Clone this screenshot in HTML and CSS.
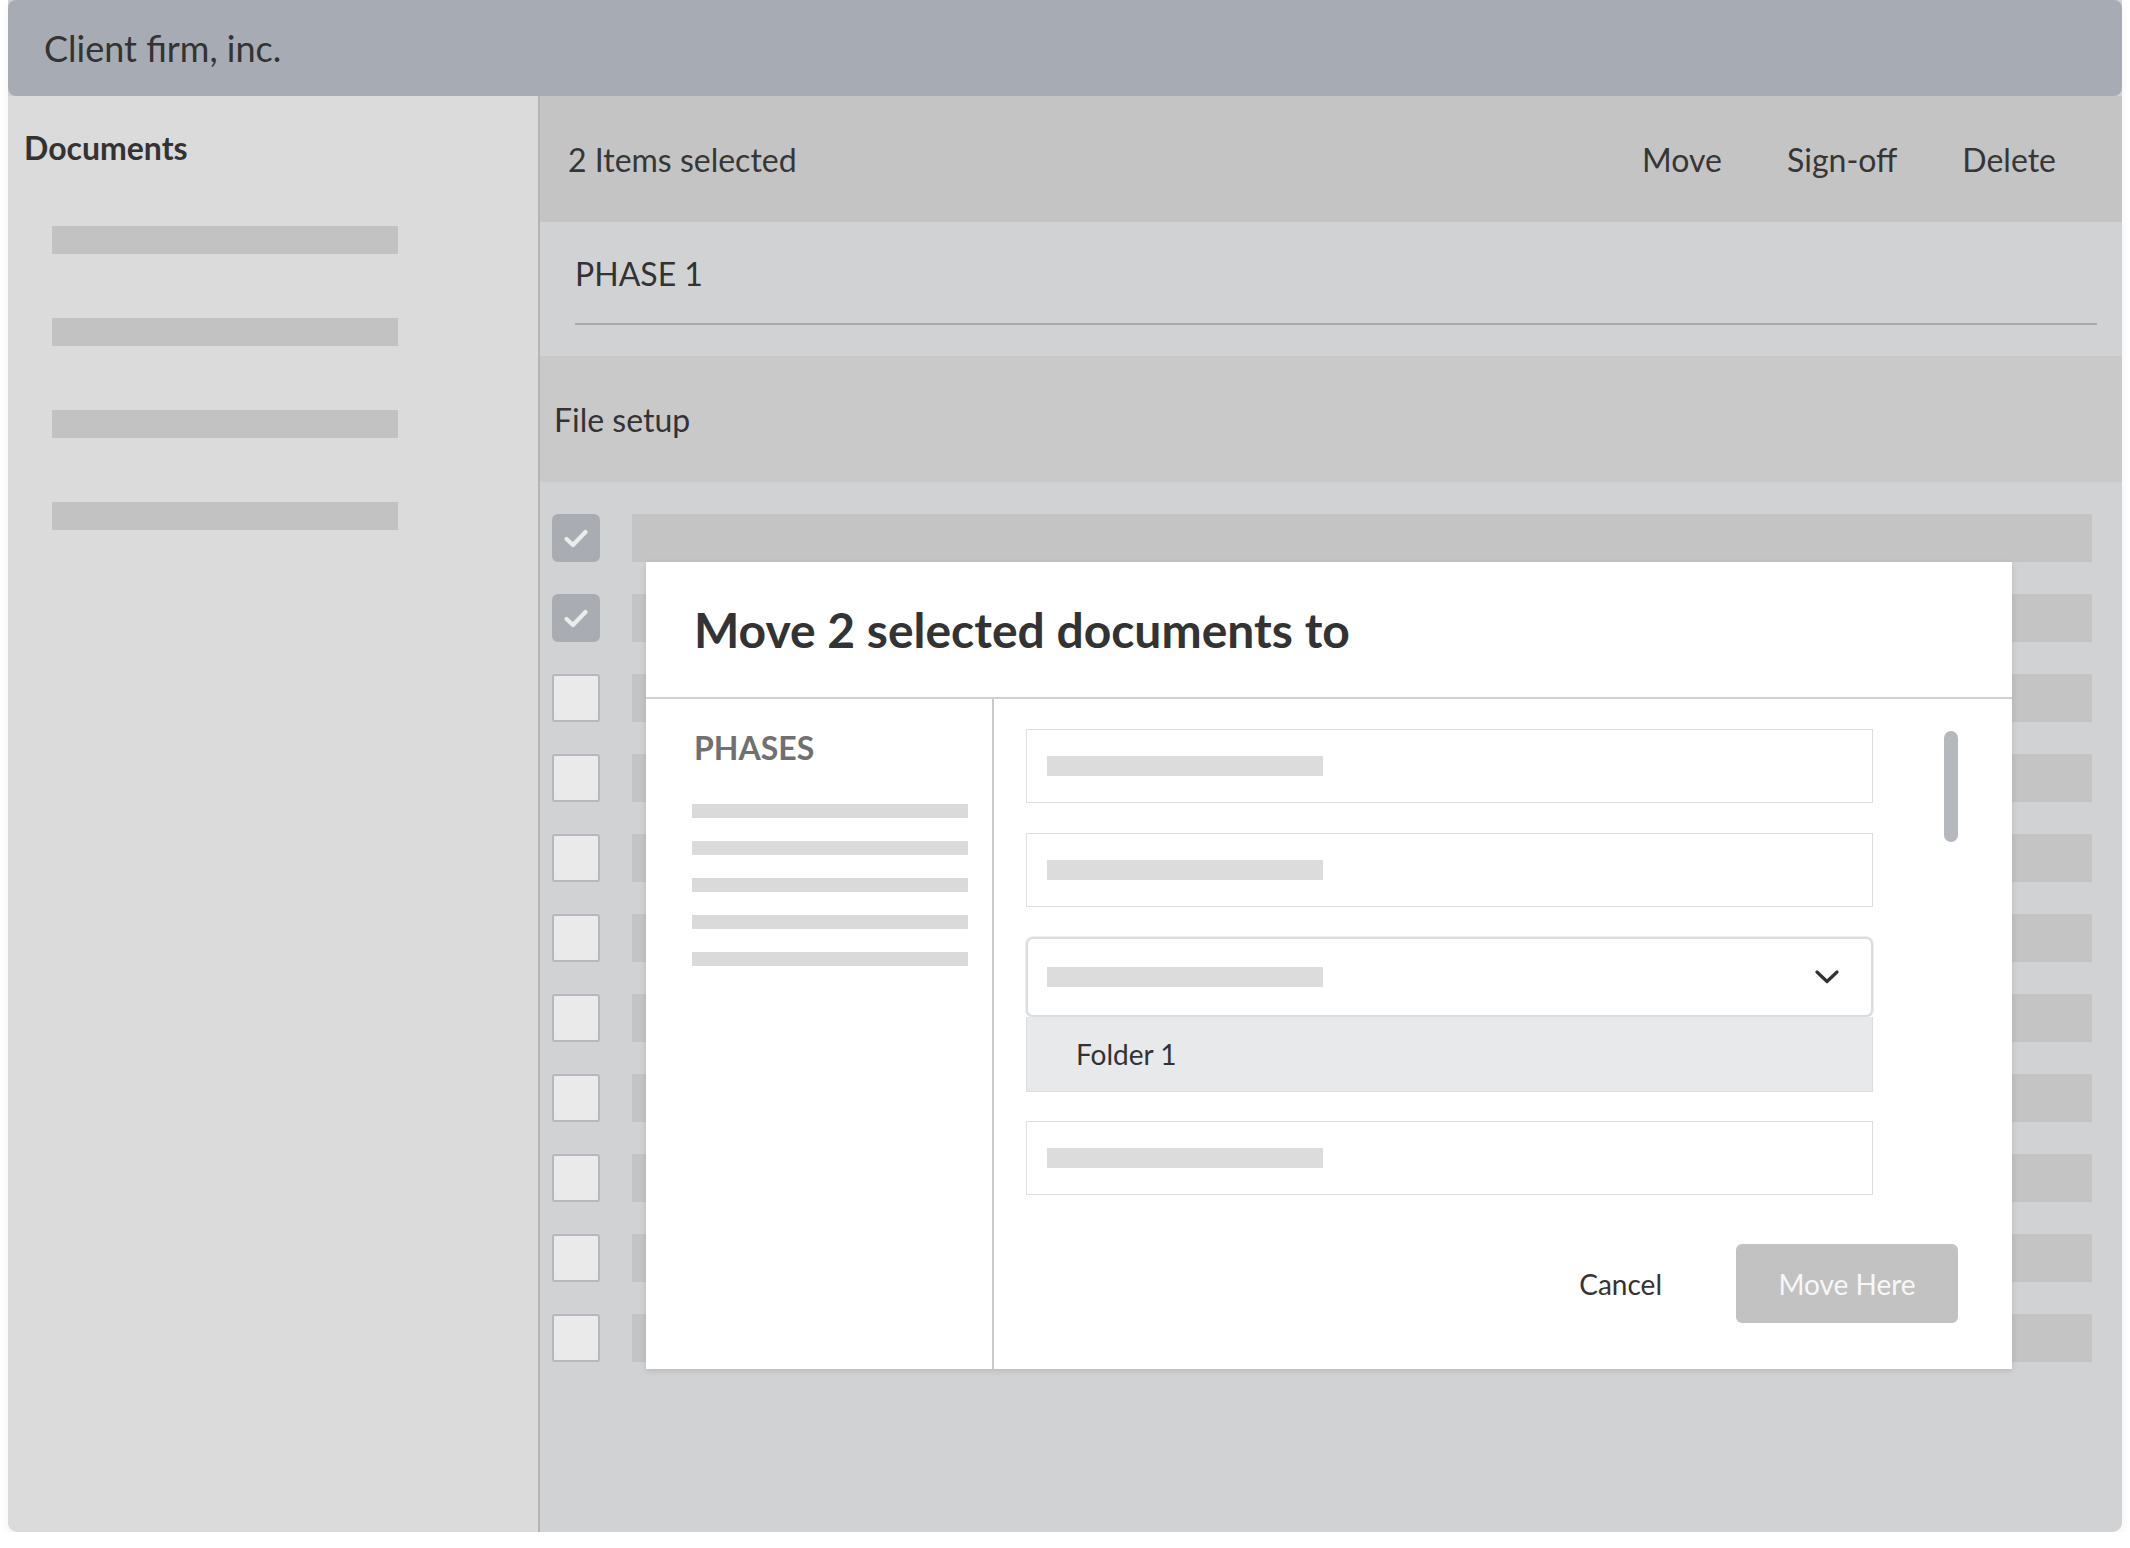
FILE: index.html
```html
<!DOCTYPE html>
<html lang="en">
<head>
<meta charset="utf-8">
<title>Client firm, inc. – Documents</title>
<link rel="stylesheet" href="styles.css">
</head>
<body>
<div class="app">
  <header class="topbar">Client firm, inc.</header>
  <div class="workspace">
    <aside class="sidebar">
      <h2 class="sidebar-title">Documents</h2>
      <div class="sidebar-list">
        <div class="ph-bar"></div>
        <div class="ph-bar"></div>
        <div class="ph-bar"></div>
        <div class="ph-bar"></div>
      </div>
    </aside>
    <main class="main">
      <div class="actionbar">
        <span class="sel-count">2 Items selected</span>
        <nav class="actions">
          <span>Move</span>
          <span>Sign-off</span>
          <span>Delete</span>
        </nav>
      </div>
      <section class="phase">
        <div class="phase-title">PHASE 1</div>
        <div class="phase-rule"></div>
      </section>
      <section class="group">File setup</section>
      <section class="rows">
        <div class="row"><span class="cb checked"><svg viewBox="0 0 48 48" width="48" height="48"><polyline points="14.5,25 21,31 33.5,18" fill="none" stroke="#ececec" stroke-width="4.2" stroke-linecap="round" stroke-linejoin="round"/></svg></span><span class="row-bar"></span></div>
        <div class="row"><span class="cb checked"><svg viewBox="0 0 48 48" width="48" height="48"><polyline points="14.5,25 21,31 33.5,18" fill="none" stroke="#ececec" stroke-width="4.2" stroke-linecap="round" stroke-linejoin="round"/></svg></span><span class="row-bar"></span></div>
        <div class="row"><span class="cb"></span><span class="row-bar"></span></div>
        <div class="row"><span class="cb"></span><span class="row-bar"></span></div>
        <div class="row"><span class="cb"></span><span class="row-bar"></span></div>
        <div class="row"><span class="cb"></span><span class="row-bar"></span></div>
        <div class="row"><span class="cb"></span><span class="row-bar"></span></div>
        <div class="row"><span class="cb"></span><span class="row-bar"></span></div>
        <div class="row"><span class="cb"></span><span class="row-bar"></span></div>
        <div class="row"><span class="cb"></span><span class="row-bar"></span></div>
        <div class="row"><span class="cb"></span><span class="row-bar"></span></div>
      </section>

      <div class="modal" role="dialog">
        <div class="modal-head">Move 2 selected documents to</div>
        <div class="modal-body">
          <div class="phases-col">
            <div class="phases-title">PHASES</div>
            <div class="phases-list">
              <div class="ph-line"></div>
              <div class="ph-line"></div>
              <div class="ph-line"></div>
              <div class="ph-line"></div>
              <div class="ph-line"></div>
            </div>
          </div>
          <div class="dest-col">
            <div class="dest-scroll">
              <div class="fields">
                <div class="field"><span class="field-bar"></span></div>
                <div class="field"><span class="field-bar"></span></div>
                <div class="select">
                  <span class="field-bar"></span>
                  <svg class="chev" viewBox="0 0 24 14" width="24" height="14"><polyline points="2,2 12,11.5 22,2" fill="none" stroke="#333" stroke-width="3.2" stroke-linecap="round" stroke-linejoin="round"/></svg>
                </div>
                <div class="option">Folder 1</div>
                <div class="field"><span class="field-bar"></span></div>
              </div>
              <div class="scrollbar"></div>
            </div>
            <div class="modal-foot">
              <span class="btn-link">Cancel</span>
              <span class="btn-primary">Move Here</span>
            </div>
          </div>
        </div>
      </div>
    </main>
  </div>
</div>
</body>
</html>
```

FILE: styles.css
```css
html, body {
  margin: 0;
  padding: 0;
  background: #ffffff;
}

body {
  font-family: "Lato", "Open Sans", "Liberation Sans", sans-serif;
  color: #333333;
}

.app {
  margin: 0 8px;
  height: 1532px;
  display: flex;
  flex-direction: column;
  background: #d1d2d4;
  border-radius: 0 0 10px 10px;
  box-shadow: 0 6px 10px rgba(0, 0, 0, 0.06);
  overflow: hidden;
}

.topbar {
  flex: none;
  height: 96px;
  box-sizing: border-box;
  padding-left: 36px;
  display: flex;
  align-items: center;
  background: #a7abb3;
  border-radius: 8px;
  font-size: 36px;
  color: #333333;
}

.workspace {
  flex: 1;
  display: flex;
  min-height: 0;
}

/* Sidebar */
.sidebar {
  flex: none;
  width: 532px;
  box-sizing: border-box;
  background: #dbdbdb;
  border-right: 2px solid #b4b4b4;
  padding: 32px 0 0 16px;
}

.sidebar-title {
  margin: 0 0 58px;
  font-size: 32px;
  line-height: 40px;
  font-weight: 700;
  color: #333333;
}

.sidebar-list {
  padding-left: 28px;
  display: flex;
  flex-direction: column;
  gap: 64px;
}

.ph-bar {
  width: 346px;
  height: 28px;
  background: #c2c2c2;
}

/* Main */
.main {
  flex: 1;
  position: relative;
  display: flex;
  flex-direction: column;
  background: #d1d2d4;
}

.actionbar {
  flex: none;
  height: 126px;
  box-sizing: border-box;
  padding: 0 66px 0 28px;
  display: flex;
  align-items: center;
  justify-content: space-between;
  background: #c4c4c4;
  font-size: 32px;
  color: #363636;
}

.actions {
  display: flex;
  gap: 65px;
}

.phase {
  flex: none;
  height: 134px;
  box-sizing: border-box;
  padding: 32px 25px 0 35px;
  background: #d1d2d4;
}

.phase-title {
  font-size: 32px;
  line-height: 40px;
  color: #333333;
}

.phase-rule {
  margin-top: 29px;
  height: 2px;
  background: #a8abb0;
}

.group {
  flex: none;
  height: 126px;
  box-sizing: border-box;
  padding-left: 14px;
  display: flex;
  align-items: center;
  background: #c9c9c9;
  font-size: 32px;
  color: #333333;
}

.rows {
  flex: 1;
  padding: 32px 30px 0 12px;
  display: flex;
  flex-direction: column;
  gap: 32px;
}

.row {
  height: 48px;
  display: flex;
  gap: 32px;
}

.cb {
  flex: none;
  width: 48px;
  height: 48px;
  box-sizing: border-box;
  border-radius: 3px;
  background: #eaeaea;
  border: 2px solid #b5b8bc;
}

.cb.checked {
  background: #a9adb3;
  border: none;
  border-radius: 6px;
}

.cb svg {
  display: block;
}

.row-bar {
  flex: 1;
  background: #c4c4c4;
}

/* Modal */
.modal {
  position: absolute;
  left: 106px;
  top: 466px;
  width: 1366px;
  height: 807px;
  display: flex;
  flex-direction: column;
  background: #ffffff;
  box-shadow: 0 2px 6px rgba(0, 0, 0, 0.12);
}

.modal-head {
  flex: none;
  height: 135px;
  padding-left: 48px;
  display: flex;
  align-items: center;
  border-bottom: 2px solid #d0d0d0;
  font-size: 48px;
  font-weight: 700;
  color: #333333;
}

.modal-body {
  flex: 1;
  display: flex;
  min-height: 0;
}

.phases-col {
  flex: none;
  width: 348px;
  box-sizing: border-box;
  padding: 29px 0 0 46px;
  border-right: 2px solid #cacaca;
}

.phases-title {
  font-size: 32px;
  line-height: 40px;
  font-weight: 700;
  color: #707070;
  padding-left: 2px;
}

.phases-list {
  margin-top: 36px;
  display: flex;
  flex-direction: column;
  gap: 23px;
}

.ph-line {
  width: 276px;
  height: 14px;
  background: #dadada;
}

.dest-col {
  flex: 1;
  display: flex;
  flex-direction: column;
  padding: 30px 54px 46px 32px;
}

.dest-scroll {
  display: flex;
  gap: 71px;
}

.fields {
  flex: 1;
  display: flex;
  flex-direction: column;
}

.field {
  height: 74px;
  box-sizing: border-box;
  border: 1px solid #dedede;
  padding-left: 20px;
  display: flex;
  align-items: center;
  margin-bottom: 30px;
}

.field:last-child {
  margin-bottom: 0;
}

.field-bar {
  width: 276px;
  height: 20px;
  background: #dcdcdc;
}

.select {
  height: 80px;
  box-sizing: border-box;
  border: 2px solid #dadcdf;
  border-radius: 7px;
  padding: 0 32px 0 19px;
  display: flex;
  align-items: center;
  justify-content: space-between;
  background: #ffffff;
  box-shadow: 0 0 0 1px #eceef0;
}

.chev {
  display: block;
}

.option {
  height: 75px;
  box-sizing: border-box;
  padding-left: 49px;
  display: flex;
  align-items: center;
  background: #e8e9eb;
  border: 1px solid #dcdde0;
  border-top: none;
  font-size: 28px;
  color: #333333;
  margin-bottom: 29px;
}

.scrollbar {
  flex: none;
  align-self: flex-start;
  margin-top: 2px;
  width: 14px;
  height: 111px;
  border-radius: 7px;
  background: #b5b8bc;
}

.modal-foot {
  margin-top: 49px;
  display: flex;
  justify-content: flex-end;
  align-items: center;
  gap: 74px;
}

.btn-link {
  font-size: 28px;
  color: #333333;
}

.btn-primary {
  width: 222px;
  height: 79px;
  display: flex;
  align-items: center;
  justify-content: center;
  border-radius: 6px;
  background: #c2c2c2;
  color: #f7f7f7;
  font-size: 28px;
}
```
